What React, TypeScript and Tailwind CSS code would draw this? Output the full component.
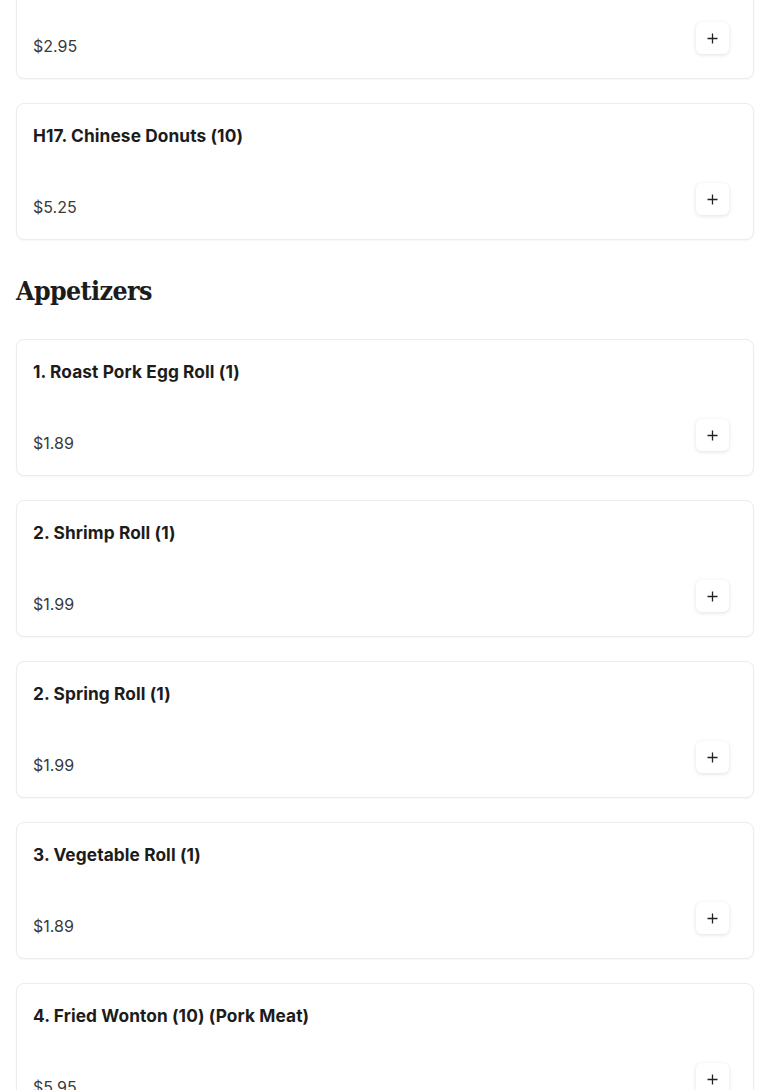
import React from "react";

type Item = { name: string; price: string };

const PlusIcon = () => (
  <svg width="11" height="11" viewBox="0 0 11 11" fill="none">
    <path d="M5.5 0.5v10M0.5 5.5h10" stroke="#222" strokeWidth="1.3" />
  </svg>
);

const Card = ({ item }: { item: Item }) => (
  <div className="rounded-lg border border-[#ececec] bg-white shadow-[0_1px_2px_rgba(0,0,0,0.04)] px-4 pt-[16px] pb-6">
    <div className="h-8 leading-8 text-[17.3px] font-bold tracking-[0.1px] text-[#1c1c1c]" style={{ fontFamily: "Inter, 'Open Sans', sans-serif" }}>
      {item.name}
    </div>
    <div className="mt-[31px] flex h-8 justify-between">
      <div className="pt-[12px] leading-6 text-[16px] text-[#3a3a3a]" style={{ fontFamily: "Inter, 'Open Sans', sans-serif" }}>
        {item.price}
      </div>
      <button className="mr-2 flex h-8 w-[33px] items-center justify-center rounded-md bg-white shadow-[0_1px_4px_rgba(0,0,0,0.12)]">
        <PlusIcon />
      </button>
    </div>
  </div>
);

const house: Item[] = [
  { name: "H16. Fried Bread", price: "$2.95" },
  { name: "H17. Chinese Donuts (10)", price: "$5.25" },
];

const appetizers: Item[] = [
  { name: "1. Roast Pork Egg Roll (1)", price: "$1.89" },
  { name: "2. Shrimp Roll (1)", price: "$1.99" },
  { name: "2. Spring Roll (1)", price: "$1.99" },
  { name: "3. Vegetable Roll (1)", price: "$1.89" },
  { name: "4. Fried Wonton (10) (Pork Meat)", price: "$5.95" },
  { name: "5. Fried Dumplings (8)", price: "$7.25" },
];

export default function App() {
  return (
    <div className="h-[1090px] overflow-hidden bg-white">
      <div className="mt-[-58px] px-4">
        <div className="flex flex-col gap-6">
          {house.map((it) => (
            <Card key={it.name} item={it} />
          ))}
        </div>
        <h2
          className="mt-[33px] mb-[30px] h-9 leading-9 text-[26.5px] font-black tracking-[-0.6px] text-[#1c1c1c]"
          style={{ fontFamily: "'DejaVu Serif Condensed', 'DejaVu Serif', serif" }}
        >
          Appetizers
        </h2>
        <div className="flex flex-col gap-6">
          {appetizers.map((it) => (
            <Card key={it.name} item={it} />
          ))}
        </div>
      </div>
    </div>
  );
}
